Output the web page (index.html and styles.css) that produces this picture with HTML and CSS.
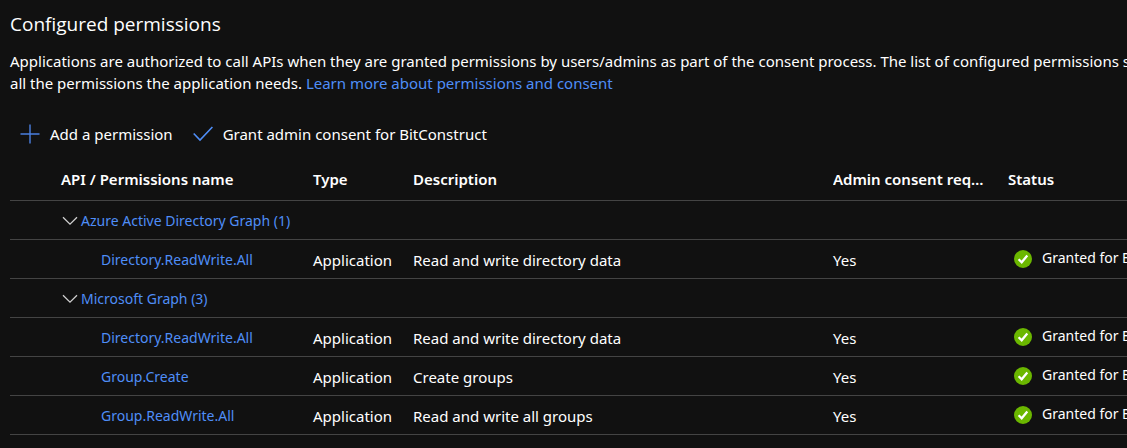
FILE: index.html
```html
<!DOCTYPE html>
<html lang="en">
<head>
<meta charset="utf-8">
<title>Configured permissions</title>
<link rel="stylesheet" href="styles.css">
</head>
<body>
<svg class="sprite" aria-hidden="true">
  <symbol id="chevron" viewBox="0 0 16 10"><path d="M1 1.2 8 8.2 15 1.2" fill="none" stroke="#d0d0d0" stroke-width="1.3"/></symbol>
  <symbol id="granted" viewBox="0 0 18 18"><circle cx="9" cy="9" r="9" fill="#6bb700"/><path d="M4.600 9.200 7.700 12.300 13.300 5.600" fill="none" stroke="#fff" stroke-width="2.300"/></symbol>
</svg>
<main class="page">
  <h1 class="title">Configured permissions</h1>
  <p class="intro">Applications are authorized to call APIs when they are granted permissions by users/admins as part of the consent process. The list of configured permissions should include<br>all the permissions the application needs. <a class="link" href="#">Learn more about permissions and consent</a></p>
  <div class="toolbar">
    <button class="command" type="button">
      <svg class="command-icon" viewBox="0 0 20 20" aria-hidden="true"><path d="M10 .5V19.500M.5 10H19.500" fill="none" stroke="#4a7fe0" stroke-width="1.4"/></svg>
      Add a permission
    </button>
    <button class="command" type="button">
      <svg class="command-icon" viewBox="0 0 20 20" aria-hidden="true"><path d="M.7 9.500 7 16 19.400 3" fill="none" stroke="#4f8ef7" stroke-width="1.6"/></svg>
      Grant admin consent for BitConstruct
    </button>
  </div>
  <table class="grid">
    <colgroup><col class="col-name"><col class="col-type"><col><col class="col-admin"><col class="col-status"></colgroup>
    <thead>
      <tr><th class="name" scope="col">API / Permissions name</th><th scope="col">Type</th><th scope="col">Description</th><th class="admin" scope="col">Admin consent required</th><th scope="col">Status</th></tr>
    </thead>
    <tbody>
      <tr><td class="group" colspan="5"><button class="toggle" type="button" aria-label="Collapse Azure Active Directory Graph"><svg class="chevron"><use href="#chevron"/></svg></button><a class="link" href="#">Azure Active Directory Graph (1)</a></td></tr>
      <tr><td class="permission"><a class="link" href="#">Directory.ReadWrite.All</a></td><td>Application</td><td>Read and write directory data</td><td>Yes</td><td class="status"><svg class="granted"><use href="#granted"/></svg>Granted for BitConstruct</td></tr>
      <tr><td class="group" colspan="5"><button class="toggle" type="button" aria-label="Collapse Microsoft Graph"><svg class="chevron"><use href="#chevron"/></svg></button><a class="link" href="#">Microsoft Graph (3)</a></td></tr>
      <tr><td class="permission"><a class="link" href="#">Directory.ReadWrite.All</a></td><td>Application</td><td>Read and write directory data</td><td>Yes</td><td class="status"><svg class="granted"><use href="#granted"/></svg>Granted for BitConstruct</td></tr>
      <tr><td class="permission"><a class="link" href="#">Group.Create</a></td><td>Application</td><td>Create groups</td><td>Yes</td><td class="status"><svg class="granted"><use href="#granted"/></svg>Granted for BitConstruct</td></tr>
      <tr><td class="permission"><a class="link" href="#">Group.ReadWrite.All</a></td><td>Application</td><td>Read and write all groups</td><td>Yes</td><td class="status"><svg class="granted"><use href="#granted"/></svg>Granted for BitConstruct</td></tr>
    </tbody>
  </table>
</main>
</body>
</html>
```
FILE: styles.css
```css
* { box-sizing: border-box; }
body {
  margin: 0;
  background: #111;
  color: #fff;
  font: 15px/22px "Segoe UI", "Noto Sans", "Open Sans", sans-serif;
}
.sprite { display: none; }
.page {
  padding: 10px 0 0 10px;
  overflow: hidden;
}
.title {
  margin: 0 0 12px;
  font-family: "Segoe UI", "Open Sans", sans-serif;
  font-size: 19px;
  line-height: 28px;
  font-weight: 400;
}
.intro {
  margin: 0;
  white-space: nowrap;
}
.link {
  color: #4f8ef7;
  text-decoration: none;
}
.toolbar {
  display: flex;
  gap: 20px;
  padding: 29px 10px 0;
}
.command {
  display: flex;
  align-items: center;
  gap: 10px;
  padding: 0;
  border: 0;
  background: none;
  color: inherit;
  font: inherit;
  white-space: nowrap;
}
.command-icon {
  width: 20px;
  height: 20px;
}
.grid {
  width: 100%;
  margin-top: 14px;
  border-collapse: collapse;
  table-layout: fixed;
}
.col-name { width: 303px; }
.col-type { width: 100px; }
.col-admin { width: 175px; }
.col-status { width: 119px; }
th, td {
  height: 39px;
  padding: 2px 0 0;
  border-bottom: 1px solid #444;
  text-align: left;
  vertical-align: middle;
  white-space: nowrap;
}
th {
  height: 41px;
  padding: 0;
  font-weight: 600;
}
.name { padding-left: 51px; }
.admin {
  padding-right: 20px;
  overflow: hidden;
  text-overflow: ellipsis;
}
.group {
  padding: 2px 0 0 52px;
  font-size: 14px;
}
.toggle {
  padding: 0;
  margin-right: 3px;
  border: 0;
  background: none;
}
.chevron {
  display: block;
  width: 16px;
  height: 10px;
}
.permission {
  padding: 2px 0 0 91px;
  font-size: 14px;
}
.status {
  padding: 0 0 2px 6px;
  overflow: hidden;
  font-size: 14px;
}
.granted {
  width: 18px;
  height: 18px;
  margin-right: 10px;
  vertical-align: middle;
}
```
